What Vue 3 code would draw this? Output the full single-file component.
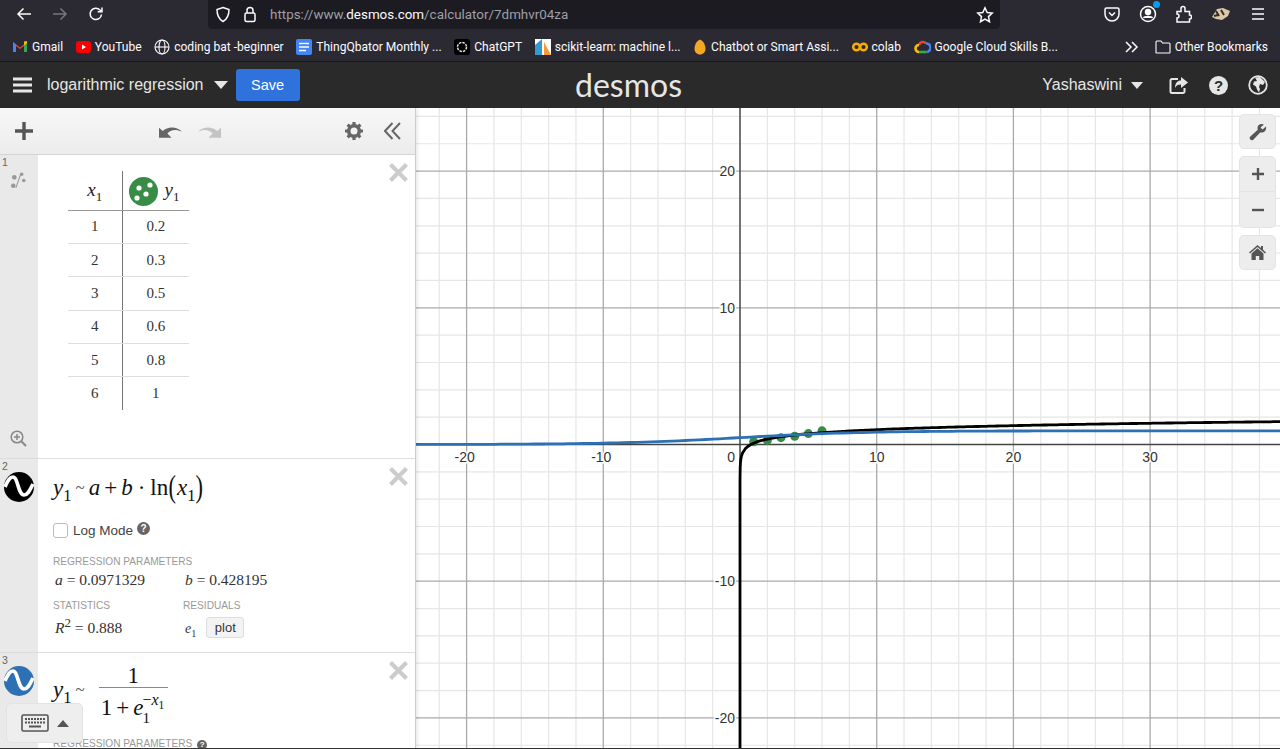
<template>
  <div class="app">
    <!-- browser chrome -->
    <div class="tabbar">
      <div class="nav">
        <svg width="16" height="16" viewBox="0 0 16 16" class="ic"><path d="M15 8H2M7.500 2.500 2 8l5.500 5.500" /></svg>
        <svg width="16" height="16" viewBox="0 0 16 16" class="ic dim"><path d="M1 8h13M8.500 2.500 14 8l-5.500 5.500" /></svg>
        <svg width="16" height="16" viewBox="0 0 16 16" class="ic"><path d="M13.500 8.500a5.700 5.700 0 1 1-1.500-4.500l1.500 1.500M14 1.500v4.300H9.700" /></svg>
      </div>
      <div class="urlbar">
        <svg width="16" height="17" viewBox="0 0 16 17" class="ic"><path d="M8 1.500 14 3.500c0 6-1.500 9.500-6 12-4.500-2.500-6-6-6-12z" /></svg>
        <svg width="14" height="17" viewBox="0 0 14 17" class="ic"><rect x="2" y="7" width="10" height="8.500" rx="1.500" /><path d="M4 7V4.500a3 3 0 0 1 6 0V7" /></svg>
        <span class="url">https://www.<b>desmos.com</b>/calculator/7dmhvr04za</span>
        <svg class="ic star" width="18" height="18" viewBox="0 0 18 18"><path d="m9 1.800 2.200 4.700 5 .6-3.700 3.500 1 5.100L9 13.200l-4.500 2.500 1-5.100L1.800 7.100l5-.6z" /></svg>
      </div>
      <div class="tools">
        <svg width="16" height="16" viewBox="0 0 16 16" class="ic"><path d="M2.500 2h11A1.500 1.500 0 0 1 15 3.500V8a7 7 0 0 1-14 0V3.500A1.500 1.500 0 0 1 2.500 2z" /><path d="m5 6.500 3 3 3-3" /></svg>
        <span class="profile">
          <svg width="18" height="18" viewBox="0 0 18 18" class="ic"><circle cx="9" cy="9" r="7.500" /><circle cx="9" cy="7" r="2.500" fill="#fbfbfe" /><path d="M4.500 13c1-2 8-2 9 0" fill="#fbfbfe" /></svg>
          <i class="sync"></i>
        </span>
        <svg width="16" height="18" viewBox="0 0 16 18" class="ic"><path d="M1 6.500h4V3.500a2 2 0 0 1 4 0v3h4.500v3.500a2 2 0 0 1 0 4v3H1v-4a2 2 0 0 0 0-4z" /></svg>
        <svg width="20" height="14" viewBox="0 0 20 14"><path d="M1 10 6 2l6-1 7 3-2 5-6 4-6-1z" fill="#d9c9a8" /><path d="M5 4l3 5M10 3l3 5M3 9l4-1" stroke="#3a2c20" stroke-width="2" fill="none" /></svg>
        <svg width="16" height="14" viewBox="0 0 16 14" class="ic"><path d="M2 2h12M2 7h12M2 12h12" /></svg>
      </div>
    </div>

    <div class="bookmarks">
      <span class="bm">
        <svg width="16" height="13" viewBox="0 0 16 13"><path d="M1 12V2l7 5.500L15 2v10h-3V6L8 9 4 6v6z" fill="#ea4335" /><path d="M1 12V2l3 2.500V12z" fill="#4285f4" /><path d="M15 12V2l-3 2.500V12z" fill="#34a853" /><path d="M12 1.500 15 1v2l-3 2.500z" fill="#fbbc04" /></svg>
        Gmail
      </span>
      <span class="bm">
        <svg width="15" height="12" viewBox="0 0 15 12"><rect width="15" height="12" rx="3" fill="#f00" /><path d="m6 3.500 4 2.500-4 2.500z" fill="#fff" /></svg>
        YouTube
      </span>
      <span class="bm">
        <svg width="16" height="16" viewBox="0 0 16 16" class="ic thin"><circle cx="8" cy="8" r="7" /><ellipse cx="8" cy="8" rx="3" ry="7" /><path d="M1 8h14" /></svg>
        coding bat -beginner
      </span>
      <span class="bm">
        <svg width="16" height="16" viewBox="0 0 16 16"><rect width="16" height="16" rx="2" fill="#4285f4" /><path d="M3 4.500h10M3 8h10M3 11.500h7" stroke="#fff" stroke-width="1.500" /></svg>
        ThingQbator Monthly ...
      </span>
      <span class="bm">
        <svg width="16" height="16" viewBox="0 0 16 16"><rect width="16" height="16" rx="3" fill="#000" /><circle cx="8" cy="8" r="4.500" fill="none" stroke="#ddd" stroke-width="1.500" stroke-dasharray="2.500 1" /></svg>
        ChatGPT
      </span>
      <span class="bm">
        <svg width="16" height="16" viewBox="0 0 16 16"><rect width="16" height="16" fill="#fff" /><path d="M0 16V6l7-6v16z" fill="#3499cd" /><path d="M9 16V3l7 13z" fill="#f89939" /></svg>
        scikit-learn: machine l...
      </span>
      <span class="bm">
        <svg width="14" height="16" viewBox="0 0 14 16"><path d="M7 .500C3.500 2 1.500 6 1.500 10c0 3 2.500 5.500 5.500 5.500s5.500-2.500 5.500-5.500C12.500 6 10.500 2 7 .500z" fill="#f5a623" /></svg>
        Chatbot or Smart Assi...
      </span>
      <span class="bm">
        <svg width="16" height="10" viewBox="0 0 16 10" fill="none" stroke="#f9ab00" stroke-width="2.500"><circle cx="4.500" cy="5" r="3.300" /><circle cx="11.500" cy="5" r="3.300" /></svg>
        colab
      </span>
      <span class="bm">
        <svg width="17" height="14" viewBox="0 0 17 14" fill="none" stroke-width="2.600"><path d="M5 5a4 4 0 0 1 7-1.500" stroke="#ea4335" /><path d="M12 3.500A4 4 0 0 1 12.500 12" stroke="#4285f4" /><path d="M12.500 12H5" stroke="#34a853" /><path d="M5 12a3.500 3.500 0 0 1 0-7" stroke="#fbbc04" /></svg>
        Google Cloud Skills B...
      </span>
      <svg class="ic more" width="14" height="12" viewBox="0 0 14 12"><path d="m1 1 5 5-5 5M7 1l5 5-5 5" /></svg>
      <span class="bm">
        <svg width="16" height="14" viewBox="0 0 16 14" class="ic thin"><path d="M1 12.500V2a1 1 0 0 1 1-1h4l1.500 2H14a1 1 0 0 1 1 1v8.500a.5.5 0 0 1-.5.5h-13a.5.5 0 0 1-.5-.5z" /></svg>
        Other Bookmarks
      </span>
    </div>

    <!-- desmos header -->
    <header class="dheader">
      <div class="dleft">
        <svg width="19" height="16" viewBox="0 0 19 16" class="burger"><path d="M0 2h19M0 8h19M0 14h19" /></svg>
        <span class="title">logarithmic regression</span>
        <i class="caret"></i>
        <button class="save">Save</button>
      </div>
      <div class="logo">desmos</div>
      <div class="dright">
        <span class="user">Yashaswini</span>
        <i class="caret small"></i>
        <svg class="hicon share" width="20" height="19" viewBox="0 0 20 19"><path d="M9 3H3a1.500 1.500 0 0 0-1.500 1.500v11A1.500 1.500 0 0 0 3 17h11a1.500 1.500 0 0 0 1.500-1.500V12" fill="none" stroke="#e6e6e6" stroke-width="2" /><path d="M12 1l7 5.500-7 5.500V8.500c-3 0-5 1-6 3.500 0-5 2.500-7.500 6-7.500z" fill="#e6e6e6" /></svg>
        <span class="hicon qmark">?</span>
        <svg class="hicon" width="20" height="20" viewBox="0 0 20 20"><circle cx="10" cy="10" r="8.800" fill="#2a2a2a" stroke="#e6e6e6" stroke-width="1.800" /><path d="M7 2.500 12 2l5 5-2 3-3-1-1 3 1 2-1 3.500-2-3-1-3-3-2 1-3 3-.5z" fill="#e6e6e6" /></svg>
      </div>
    </header>

    <div class="calc">
      <!-- expression list -->
      <aside class="sidebar">
        <div class="toolbar">
          <svg width="18" height="18" viewBox="0 0 18 18" class="plus"><path d="M9 0v18M0 9h18" /></svg>
          <svg class="undo" width="23" height="13" viewBox="0 0 22 12"><path d="M0 12V2.500l3.600 3C8 1.500 16 .500 22 6 16 3.500 11 4 8 8l4 4z" fill="#666" /></svg>
          <svg class="redo" width="23" height="13" viewBox="0 0 22 12"><path d="M22 12V2.500l-3.600 3C14 1.500 6 .500 0 6c6-2.500 11-2 14 2l-4 4z" fill="#c4c4c4" /></svg>
          <svg class="gear" width="18" height="18" viewBox="0 0 18 18"><circle cx="9" cy="9" r="5.300" fill="none" stroke="#666" stroke-width="3.600" /><path d="M9 0v18M0 9h18M2.600 2.600l12.800 12.800M15.400 2.600 2.600 15.400" stroke="#666" stroke-width="3.200" stroke-dasharray="3 12 3" fill="none" /></svg>
          <svg class="collapse" width="17" height="18" viewBox="0 0 17 18" fill="none" stroke="#666" stroke-width="2"><path d="M8.500 1 1 9l7.500 8M16 1 8.500 9l7.500 8" /></svg>
        </div>

        <div class="exprs">
          <section class="expr first">
            <div class="gutter">
              <span class="num">1</span>
              <svg class="tableicon" width="17" height="21" viewBox="0 0 16 20"><path d="M10.500 3 5.500 17" stroke="#999" stroke-width="1" /><circle cx="11" cy="4" r="1.700" fill="#999" /><circle cx="4" cy="7" r="2.200" fill="#999" /><circle cx="13" cy="10" r="1.700" fill="#999" /><circle cx="3" cy="15" r="2.200" fill="#999" /></svg>
              <svg class="zoomicon" width="17" height="17" viewBox="0 0 17 17" fill="none" stroke="#888" stroke-width="1.500"><circle cx="7" cy="7" r="5.800" /><path d="M4 7h6M7 4v6" /><path d="m11.500 11.500 4.500 4.500" stroke-width="2" /></svg>
            </div>
            <div class="body">
              <table class="dtable">
                <thead>
                  <tr>
                    <th><span class="mi">x</span><sub>1</sub></th>
                    <th class="ycol">
                      <svg width="29" height="29" viewBox="0 0 29 29"><circle cx="14.500" cy="14.500" r="14.500" fill="#388c46" /><circle cx="10" cy="11" r="2.600" fill="#fff" /><circle cx="21" cy="8" r="2.600" fill="#fff" /><circle cx="17" cy="17" r="2.600" fill="#fff" /><circle cx="8" cy="21" r="2.600" fill="#fff" /></svg>
                      <span class="ylabel"><span class="mi">y</span><sub>1</sub></span>
                    </th>
                  </tr>
                </thead>
                <tbody>
                  <tr v-for="row in rows" :key="row[0]">
                    <td>{{ row[0] }}</td>
                    <td>{{ row[1] }}</td>
                  </tr>
                </tbody>
              </table>
            </div>
            <svg class="close" width="19" height="19" viewBox="0 0 19 19"><path d="M1.500 1.500l16 16M17.500 1.500l-16 16" /></svg>
          </section>

          <section class="expr second">
            <div class="gutter">
              <span class="num">2</span>
              <svg class="wave" width="30" height="30" viewBox="0 0 30 30"><circle cx="15" cy="15" r="15" fill="#000" /><path d="M1 15C4 8 6 5 9 5c5 0 5 18 11 18 4 0 6-5 9-11" fill="none" stroke="#fff" stroke-width="3.600" /></svg>
            </div>
            <div class="body">
              <div class="math big">
                <span class="mi">y</span><sub>1</sub><span class="tilde">~</span><span class="mi">a</span><span class="op">+</span><span class="mi">b</span><span class="op cdot">·</span>ln<span class="paren">(</span><span class="mi">x</span><sub>1</sub><span class="paren">)</span>
              </div>
              <label class="logmode">
                <i class="check"></i>
                <span>Log Mode</span>
                <i class="help">?</i>
              </label>
              <div class="caps first-cap">REGRESSION PARAMETERS</div>
              <div class="vals">
                <span class="val col-a"><span class="mi">a</span> = 0.0971329</span>
                <span class="val"><span class="mi">b</span> = 0.428195</span>
              </div>
              <div class="caps two">
                <span class="col-stat">STATISTICS</span>
                <span>RESIDUALS</span>
              </div>
              <div class="vals last">
                <span class="val col-r"><span class="mi">R</span><sup>2</sup> = 0.888</span>
                <span class="val resid"><span class="mi">e</span><sub>1</sub></span>
                <button class="plot">plot</button>
              </div>
            </div>
            <svg class="close" width="19" height="19" viewBox="0 0 19 19"><path d="M1.500 1.500l16 16M17.500 1.500l-16 16" /></svg>
          </section>

          <section class="expr third">
            <div class="gutter">
              <span class="num">3</span>
              <svg class="wave" width="30" height="30" viewBox="0 0 30 30"><circle cx="15" cy="15" r="15" fill="#2d70b3" /><path d="M1 15C4 8 6 5 9 5c5 0 5 18 11 18 4 0 6-5 9-11" fill="none" stroke="#fff" stroke-width="3.600" /></svg>
            </div>
            <div class="body">
              <div class="math frac-row">
                <span class="lhs"><span class="mi">y</span><sub>1</sub><span class="tilde">~</span></span>
                <span class="frac">
                  <span class="top">1</span>
                  <span class="bottom">1<span class="op">+</span><span class="mi">e</span><span class="stack"><span class="pow">−<span class="mi">x</span><sub>1</sub></span><span class="sb">1</span></span></span>
                </span>
              </div>
              <div class="caps cut">REGRESSION PARAMETERS <i class="help small">?</i></div>
            </div>
            <svg class="close" width="19" height="19" viewBox="0 0 19 19"><path d="M1.500 1.500l16 16M17.500 1.500l-16 16" /></svg>
          </section>
        </div>

        <div class="keyboard">
          <svg width="28" height="18" viewBox="0 0 28 18"><rect x="1" y="1" width="26" height="16" rx="1.500" fill="none" stroke="#555" stroke-width="1.600" /><path d="M4 5h20M4 8.500h20" stroke="#555" stroke-width="2" stroke-dasharray="2 1" /><path d="M8 12.500h12" stroke="#555" stroke-width="2" /></svg>
          <i class="kcaret"></i>
        </div>
      </aside>

      <!-- graph paper -->
      <div class="graph">
        <svg class="paper" width="864" height="641" viewBox="0 0 864 641">
          <line v-for="g in minorX" :key="'mx' + g" :x1="g" :x2="g" y1="0" y2="641" class="minor" />
          <line v-for="g in minorY" :key="'my' + g" :y1="g" :y2="g" x1="0" x2="864" class="minor" />
          <line v-for="g in majorX" :key="'jx' + g" :x1="g" :x2="g" y1="0" y2="641" class="major" />
          <line v-for="g in majorY" :key="'jy' + g" :y1="g" :y2="g" x1="0" x2="864" class="major" />
          <line :x1="ox" :x2="ox" y1="0" y2="641" class="axis" />
          <line :y1="oy" :y2="oy" x1="0" x2="864" class="axis" />
          <text v-for="l in xLabels" :key="'lx' + l.t" :x="l.x" :y="oy + 17" text-anchor="middle" class="lab">{{ l.t }}</text>
          <text v-for="l in yLabels" :key="'ly' + l.t" :x="ox - 5" :y="l.y + 5" text-anchor="end" class="lab">{{ l.t }}</text>
          <text :x="ox - 5" :y="oy + 17" text-anchor="end" class="lab">0</text>
          <circle v-for="p in points" :key="p.x" :cx="p.x" :cy="p.y" r="4.500" fill="#388c46" />
          <path :d="blackCurve" fill="none" stroke="#000" stroke-width="2.800" />
          <path :d="blueCurve" fill="none" stroke="#2d70b3" stroke-width="2.800" />
        </svg>

        <div class="controls">
          <button class="ctl">
            <svg width="18" height="18" viewBox="0 0 18 18"><path d="M17 3.500 13.500 6.500l-2-2L15 1.500C12 0 8.500 1.500 8.500 5c0 .8.100 1.300.3 1.800L1.300 13.500a2.200 2.200 0 0 0 3 3.200l6.900-7.300c3.700 1 6.700-2.300 5.800-5.900z" fill="#555" /></svg>
          </button>
          <div class="ctl-group">
            <button class="ctl inner">
              <svg width="14" height="14" viewBox="0 0 14 14"><path d="M7 1v12M1 7h12" stroke="#555" stroke-width="2.400" /></svg>
            </button>
            <button class="ctl inner minus">
              <svg width="14" height="14" viewBox="0 0 14 14"><path d="M1 7h12" stroke="#555" stroke-width="2.400" /></svg>
            </button>
          </div>
          <button class="ctl">
            <svg width="17" height="15" viewBox="0 0 17 15"><path d="M8.500 0 0 7.500l1 1L8.500 2 16 8.500l1-1-3-2.700V1h-2v2z" fill="#555" /><path d="M8.500 3.200 2.500 8.500V15h4.300v-4h3.400v4h4.300V8.500z" fill="#555" /></svg>
          </button>
        </div>
      </div>
    </div>
  </div>
</template>

<script setup>
const rows = [[1, 0.2], [2, 0.3], [3, 0.5], [4, 0.6], [5, 0.8], [6, 1]]

// graph paper: origin and px per unit, measured off the x/y labels
const ox = 324
const oy = 336.5
const unit = 13.67
const px = (x) => ox + x * unit
const py = (y) => oy - y * unit

function range(from, to, step) {
  const out = []
  for (let v = from; v <= to; v += step) out.push(v)
  return out
}

const minorX = range(-22, 40, 2).filter((v) => v % 10 !== 0).map(px)
const minorY = range(-22, 24, 2).filter((v) => v % 10 !== 0).map(py)
const majorX = range(-20, 30, 10).filter((v) => v !== 0).map(px)
const majorY = range(-20, 20, 10).filter((v) => v !== 0).map(py)

const xLabels = [-20, -10, 10, 20, 30].map((t) => ({ t, x: px(t) - (t < 0 ? 2 : 0) }))
const yLabels = [20, 10, -10, -20].map((t) => ({ t, y: py(t) }))
const points = rows.map(([x, y]) => ({ x: px(x), y: py(y) }))

function curve(fn, from, to, step) {
  return range(from, to, step)
    .map((x, i) => `${i ? 'L' : 'M'}${px(x).toFixed(1)} ${py(fn(x)).toFixed(1)}`)
    .join('')
}

const blackFit = (x) => 0.0971329 + 0.428195 * Math.log(x)
// the log drops off the bottom of the paper right next to the y axis
const blackCurve =
  `M${ox} 641` + curve(blackFit, 0.001, 0.2, 0.005).replace('M', 'L') + curve(blackFit, 0.2, 40, 0.2).replace('M', 'L')
const blueCurve = curve((x) => 1 / (1 + Math.exp(-x / 4.5)), -24, 40, 0.5)
</script>

<style>
html, body { margin: 0; background: #fff; overflow: hidden; }
</style>

<style scoped>
* { box-sizing: border-box; }
.app { width: 1280px; height: 749px; display: flex; flex-direction: column; overflow: hidden; font-family: "Liberation Sans", sans-serif; border-bottom: 1px solid #333; }

.ic { fill: none; stroke: #fbfbfe; stroke-width: 1.500; flex: none; }
.ic.dim { stroke: #77767d; }
.ic.thin { stroke-width: 1.100; }

.tabbar { height: 29px; background: #2b2a33; display: flex; flex: none; }
.nav { width: 208px; flex: none; display: flex; align-items: center; gap: 20px; padding: 0 0 2px 16px; }
.urlbar { width: 792px; flex: none; background: #1c1b22; border-radius: 0 0 4px 4px; display: flex; align-items: center; padding: 0 6px 0 7px; gap: 12px; }
.url { font: 13.400px Roboto, sans-serif; color: #9f9fa6; white-space: nowrap; margin-left: 1px; }
.url b { font-weight: 400; color: #fbfbfe; }
.star { margin-left: auto; }
.tools { flex: 1; display: flex; align-items: center; gap: 19px; padding: 0 0 2px 104px; }
.profile { position: relative; display: flex; }
.sync { position: absolute; right: -3px; top: -4px; width: 7px; height: 7px; border-radius: 50%; background: #0a9ee6; }

.bookmarks { height: 33px; flex: none; background: #2b2a33; display: flex; align-items: center; gap: 12.600px; padding: 3px 12px 0; border-bottom: 1px solid #17161c; color: #fbfbfe; font: 12.050px Roboto, sans-serif; }
.bm { display: flex; align-items: center; gap: 4px; white-space: nowrap; }
.more { margin-left: auto; margin-right: 3px; }

.dheader { height: 46px; flex: none; background: #2a2a2a; display: flex; align-items: center; color: #e6e6e6; }
.dleft { width: 575px; display: flex; align-items: center; padding-left: 13px; }
.burger { stroke: #e6e6e6; stroke-width: 3; fill: none; }
.title { font-size: 16px; margin-left: 15px; }
.caret { width: 0; height: 0; border: 7px solid transparent; border-top: 8px solid #e6e6e6; border-bottom: 0; margin: 0 8px 0 10px; }
.caret.small { border-width: 6px; border-top-width: 7px; border-bottom-width: 0; margin: 0 0 0 9px; }
.save { width: 64px; height: 32px; background: #2f72dc; border: 0; border-radius: 3px; color: #fff; font: 14.500px "Liberation Sans", sans-serif; }
.logo { font: 400 32px Lato, sans-serif; color: #e6e6e6; width: 107px; line-height: 46px; white-space: nowrap; }
.dright { margin-left: auto; display: flex; align-items: center; padding-right: 12px; }
.user { font-size: 16px; }
.hicon { margin-left: 20px; flex: none; }
.share { margin-left: 26px; }
.qmark { width: 19px; height: 19px; border-radius: 50%; background: #e6e6e6; color: #2a2a2a; font: bold 15px/19px "Liberation Sans", sans-serif; text-align: center; }

.calc { flex: 1; display: flex; min-height: 0; }
.sidebar { width: 416px; flex: none; position: relative; z-index: 1; display: flex; flex-direction: column; border-right: 1px solid #ccc; background: #fff; overflow: hidden; box-shadow: 1px 0 4px rgba(0, 0, 0, .12); }
.toolbar { height: 47px; flex: none; display: flex; align-items: center; padding-left: 15px; background: linear-gradient(#f7f7f7, #ececec); border-bottom: 1px solid #d4d4d4; }
.plus { stroke: #555; stroke-width: 3.400; fill: none; }
.undo { margin-left: 126px; }
.redo { margin-left: 16px; }
.gear { margin-left: 124px; }
.collapse { margin-left: 21px; }

.exprs { flex: 1; min-height: 0; }
.expr { display: flex; position: relative; border-bottom: 1px solid #ddd; }
.expr.first { height: 304px; }
.expr.second { height: 194px; }
.expr.third { height: 96px; border-bottom: 0; overflow: hidden; }
.gutter { width: 38px; flex: none; background: #e9e9e9; position: relative; }
.num { position: absolute; left: 2px; top: 1px; font-size: 10.500px; color: #666; }
.tableicon { position: absolute; left: 10px; top: 15px; }
.zoomicon { position: absolute; left: 10px; bottom: 11px; }
.wave { position: absolute; left: 4px; top: 13px; }
.body { flex: 1; padding-left: 15px; min-width: 0; }
.close { position: absolute; left: 389px; top: 8px; fill: none; stroke: #ccc; stroke-width: 4.200; }

.dtable { border-collapse: collapse; margin: 16px 0 0 15px; font: 15px "Liberation Serif", serif; color: #333; }
.dtable th { height: 39px; width: 54px; font-weight: 400; border-bottom: 1px solid #999; padding: 0; font-size: 19px; color: #222; }
.dtable .ycol { width: 67px; text-align: left; padding: 2px 0 0 6px; }
.dtable .ycol svg { vertical-align: middle; }
.ylabel { margin-left: 7px; }
.dtable td { height: 33.400px; text-align: center; border-bottom: 1px solid #ddd; padding: 0; }
.dtable tr:last-child td { border-bottom: 0; }
.dtable th:first-child, .dtable td:first-child { border-right: 1px solid #777; }
.dtable sub { font-size: 13px; }

.mi { font-style: italic; font-family: "Liberation Serif", serif; }
sub { font-size: .72em; vertical-align: -.35em; line-height: 0; }
sup { font-size: .7em; vertical-align: .5em; line-height: 0; }
.math { font-family: "Liberation Serif", serif; color: #111; white-space: nowrap; }
.big { font-size: 23px; height: 42px; padding-top: 16px; line-height: 26px; }
.tilde { margin: 0 4px; font-size: 17px; color: #555; position: relative; top: -2px; }
.op { margin: 0 4px; }
.op.cdot { margin: 0 5px; }
.paren { font-size: 32px; font-weight: 300; line-height: 0; display: inline-block; transform: translateY(2px) scaleX(.7); margin: 0 -1px; }

.logmode { display: flex; align-items: center; margin-top: 21px; font-size: 13.500px; color: #444; height: 16px; }
.check { width: 15px; height: 15px; border: 1px solid #bbb; border-radius: 3px; background: #fff; margin-right: 5px; }
.help { width: 13px; height: 13px; border-radius: 50%; background: #666; color: #fff; font: bold 10px/13px "Liberation Sans", sans-serif; text-align: center; margin: -4px 0 0 4px; display: inline-block; }
.help.small { width: 10px; height: 10px; font-size: 8px; line-height: 10px; margin: 0 0 0 2px; vertical-align: 0; }

.caps { font-size: 10.150px; line-height: 13px; color: #999; white-space: nowrap; }
.first-cap { margin-top: 17px; }
.two { margin-top: 9px; display: flex; }
.col-stat { width: 130px; }
.vals { display: flex; align-items: baseline; font: 15.500px "Liberation Serif", serif; color: #333; height: 22px; padding: 3px 0 0 2px; }
.col-a { width: 130px; }
.col-r { width: 130px; }
.last { height: 26px; padding-top: 6px; }
.col-r sup { font-size: 13px; }
.resid { font-size: 14px; }
.plot { margin-left: 10px; width: 38px; height: 21px; background: #f3f3f3; border: 1px solid #ddd; border-radius: 3px; font: 13px "Liberation Sans", sans-serif; color: #333; padding: 0; transform: translateY(-1px); }

.frac-row { display: flex; align-items: flex-start; height: 84px; font-size: 23px; }
.lhs { margin-top: 24px; line-height: 26px; }
.frac { display: inline-flex; flex-direction: column; align-items: center; margin: 12px 0 0 10px; width: 69px; }
.top { border-bottom: 1.500px solid #888; width: 100%; text-align: center; line-height: 22px; }
.bottom { display: flex; align-items: baseline; line-height: 30px; padding-top: 5px; width: 100%; padding-left: 2px; }
.bottom .op { margin: 0 4px; }
.stack { position: relative; width: 24px; display: inline-block; }
.pow { position: absolute; left: -1px; top: -25px; font-size: 16px; line-height: 20px; white-space: nowrap; }
.sb { font-size: 15px; position: absolute; left: -1px; top: -5px; line-height: 16px; }
.cut { margin-top: 0; }

.keyboard { position: absolute; left: 6px; top: 595px; width: 77px; height: 40px; background: #eee; border: 1px solid #e2e2e2; border-radius: 5px; display: flex; align-items: center; padding-left: 14px; gap: 8px; }
.kcaret { width: 0; height: 0; border: 6px solid transparent; border-bottom: 7px solid #555; border-top: 0; }

.graph { flex: 1; position: relative; overflow: hidden; background: #fff; }
.paper { display: block; }
.minor { stroke: #e6e6e6; stroke-width: 1.200; }
.major { stroke: #aaa; stroke-width: 1.300; }
.axis { stroke: #444; stroke-width: 1.500; }
.lab { font: 14px "Liberation Sans", sans-serif; fill: #333; paint-order: stroke; stroke: #fff; stroke-width: 3px; }

.controls { position: absolute; right: 4px; top: 6px; display: flex; flex-direction: column; gap: 7px; }
.ctl { width: 37px; height: 35px; background: #ededed; border: 1px solid #e3e3e3; border-radius: 5px; padding: 0; display: flex; align-items: center; justify-content: center; }
.ctl-group { display: flex; flex-direction: column; }
.ctl.inner { height: 36px; border-radius: 5px 5px 0 0; }
.ctl.minus { border-radius: 0 0 5px 5px; border-top: 0; }
</style>
